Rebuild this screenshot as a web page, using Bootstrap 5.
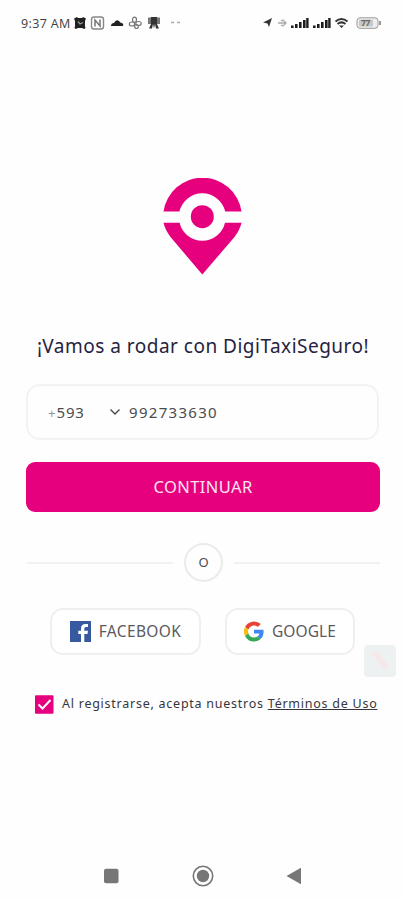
<!DOCTYPE html>
<html lang="es">
<head>
<meta charset="utf-8">
<meta name="viewport" content="width=device-width, initial-scale=1">
<title>DigiTaxiSeguro</title>
<link href="https://cdn.jsdelivr.net/npm/bootstrap@5.3.0/dist/css/bootstrap.min.css" rel="stylesheet">
<style>
:root{--pink:#e6007e}
body{font-family:"Noto Sans",sans-serif;color:#4c4c50;background:#fefefe}
.screen{width:404px;height:900px}
svg{display:block;flex:none}
.status{height:46px;padding:0 21px 0 21px;font:12.5px "Open Sans",sans-serif;color:#3d3d3d;letter-spacing:.35px}
.time{width:51px}
.pin{margin:132px 0 0 163px}
.headline{margin:56px 0 0 2px;height:30px;line-height:30px;font-size:19px;color:#25223f;letter-spacing:.49px}
.phone{margin:23px 25px 0 26px;height:56px;border:2px solid #f3f3f4;border-radius:14px;font-size:15px;letter-spacing:.9px;padding-left:20px}
.prefix{width:61px}
.plus{opacity:.6}
.number{letter-spacing:1.3px}
.go{margin:22px 24px 0 26px;height:50px;background:var(--pink);border-radius:9px;font-size:16.5px;color:#fde3f1;border:0;letter-spacing:.4px}
.go:hover{background:var(--pink);color:#fff}
.or{margin:31px 24px 0 27px;height:39px}
.line{height:2px;background:#f1f1f1}
.ring{width:39px;height:39px;border:2px solid #ebebeb;font-size:13px;margin:0 11px;line-height:1}
.social{margin:26px 49px 0 50px;height:47px}
.soc{border:2px solid #efefef;border-radius:13px;background:#fff;font-size:15.5px;color:#5a5a5e;padding:0}
.fb{width:151px;letter-spacing:.35px}.gg{width:130px;letter-spacing:.1px}
.terms{margin:39px 0 0 35px;height:20px;font-size:12.5px;color:#37373b;letter-spacing:.75px}
.bubble{position:absolute;left:363px;top:644px}
.sysnav{height:48px;padding:0 102px 0 103px}
</style>
</head>
<body>
<main class="screen position-relative d-flex flex-column overflow-hidden">
  <header class="status d-flex align-items-center justify-content-between">
    <div class="d-flex align-items-center">
      <span class="text-nowrap time">9:37 AM</span>
      <svg width="112" height="16" viewBox="0 0 112 16">
        <path d="M2 3.500l3-1.500 1 1h4l1-1 3 1.500-1 2.500v5l.5 2-1.500 1-2-1H6l-2 1-1.500-1 .5-2V6z" fill="#222"/><path d="M6 6.500l2 2.500 3-1.500" fill="none" stroke="#999" stroke-width="1.300"/>
        <rect x="19.500" y="2" width="12" height="12" rx="2.500" fill="none" stroke="#888" stroke-width="1.400"/>
        <path d="M23 11.500V5l5 6V4.500" fill="none" stroke="#777" stroke-width="1.500"/>
        <path d="M39 11q0-3 3-3 2-4 5-2 1 2 3 2 2 1 1 3z" fill="#222"/>
        <g fill="none" stroke="#777" stroke-width="1.200"><ellipse cx="62.500" cy="4.800" rx="2" ry="2.600"/><ellipse cx="66.500" cy="8.500" rx="2.700" ry="2"/><ellipse cx="60" cy="9" rx="2.700" ry="2"/><ellipse cx="64.500" cy="11.500" rx="1.800" ry="2"/></g>
        <path d="M76 2.500h3V9h-3zM85 2.500h3V9h-3z" fill="#777"/><path d="M79 2h6v7l2 4.500h-3l-1-4.500-1 4.500-1-4.500-1 4.500h-3L79 9z" fill="#333"/>
        <path d="M99 7.500h3M105 7.500h3" stroke="#aaa" stroke-width="1.500"/>
      </svg>
    </div>
    <svg width="121" height="16" viewBox="0 0 121 16">
      <path d="M1 7.500L10 3 7 12 5.500 8.500z" fill="#333"/>
      <path d="M16 8h8M19 6l2-1 3 3-3 3-2-1" fill="none" stroke="#aaa" stroke-width="1.300"/>
      <g fill="#1d1d1d"><path d="M29 10.500h2.600V13H29zM33 9h2.600v4H33zM37 7h2.600v6H37zM41 5h2.600v8H41zM44.200 3h2.400v10h-2.400z"/><path d="M51 10.500h2.600V13H51zM55 9h2.600v4H55zM59 7h2.600v6H59zM63 5h2.600v8H63zM66.200 3h2.400v10h-2.400z"/></g>
      <g fill="none" stroke="#333" stroke-width="2"><path d="M73.500 6.500q6-5 12 0M75.500 9q4-3.200 8 0"/></g><path d="M77 10.500h5L79.500 13z" fill="#333"/>
      <rect x="95" y="2.800" width="21" height="10.500" rx="3" fill="#eee" stroke="#999"/><rect x="97" y="4.500" width="14" height="7" rx="1" fill="#c8c8c8"/>
      <text x="99" y="11.300" font-size="8.500" font-weight="700" fill="#666" letter-spacing="-.3">77</text><path d="M118 6v4" stroke="#999" stroke-width="2"/>
    </svg>
  </header>

  <svg class="pin" width="79" height="97" viewBox="0 0 79 97" fill="#e6007e">
    <path d="M.5 33.500A39.400 39.400 0 0 1 78.500 33.500H62.200a23.500 23.500 0 0 0-45.800 0z"/>
    <path d="M.5 44.700H16.600a23.300 23.300 0 0 0 45.400 0H78.500Q77 51.500 71.500 59L39.300 96.500 7.500 59Q2 51.500 .5 44.700z"/>
    <circle cx="39.300" cy="38.700" r="11.500"/>
  </svg>

  <h1 class="headline text-center text-nowrap fw-normal">¡Vamos a rodar con DigiTaxiSeguro!</h1>

  <div class="phone d-flex align-items-center">
    <span class="prefix"><small class="plus">+</small>593</span>
    <svg width="12" height="8" viewBox="0 0 12 8"><path d="M1.500 1.500L6 6l4.500-4.500" fill="none" stroke="#444" stroke-width="1.300"/></svg>
    <span class="ms-2 number">992733630</span>
  </div>

  <button class="go btn d-flex align-items-center justify-content-center">CONTINUAR</button>

  <div class="or d-flex align-items-center">
    <div class="line flex-fill"></div>
    <div class="ring rounded-circle d-flex align-items-center justify-content-center">O</div>
    <div class="line flex-fill"></div>
  </div>

  <div class="social d-flex justify-content-between">
    <button class="soc fb btn d-flex align-items-center justify-content-center">
      <svg class="me-2" width="21" height="21" viewBox="0 0 21 21"><path d="M0 0h21v21H0z" fill="#3759a0"/><path d="M11 21v-8H8.300V9.700H11V7.500Q11 3 15.500 3H18v3h-2q-1.700 0-1.700 1.700v2H18l-.5 3.300h-3.200v8z" fill="#fff"/></svg>FACEBOOK</button>
    <button class="soc gg btn d-flex align-items-center justify-content-center">
      <svg class="me-2" width="20" height="21" viewBox="0 0 48 48"><path fill="#ea4335" d="M24 9.500c3.500 0 6.700 1.200 9.200 3.600l6.900-6.900A24 24 0 0 0 2.600 13.200l8 6.200C12.400 13.700 17.700 9.500 24 9.500z"/><path fill="#4285f4" d="M47 24.500c0-1.600-.2-3.100-.4-4.500H24v9h12.900c-.6 3-2.300 5.500-4.800 7.200l7.700 6C44.400 38 47 31.800 47 24.500z"/><path fill="#fbbc05" d="M10.500 28.600a14 14 0 0 1 0-9.200l-8-6.200a24 24 0 0 0 0 21.600z"/><path fill="#34a853" d="M24 48c6.500 0 11.900-2.100 15.900-5.800l-7.700-6c-2.200 1.500-4.900 2.300-8.200 2.300-6.300 0-11.600-4.200-13.500-9.900l-8 6.200A24 24 0 0 0 24 48z"/></svg>GOOGLE</button>
  </div>

  <div class="terms d-flex align-items-center text-nowrap">
    <svg class="me-2" width="19" height="19" viewBox="0 0 19 19"><rect width="18.500" height="18.500" y=".2" rx="1" fill="#e6007e"/><path d="M3.500 9.500l4 4 8-8.500" fill="none" stroke="#fff" stroke-width="2"/></svg>
    <span class="legal">Al registrarse, acepta nuestros <span class="text-decoration-underline">Términos de Uso</span></span>
  </div>

  <svg class="bubble" width="34" height="34" viewBox="0 0 34 34"><rect x="1" y="1" width="32" height="32" rx="4" fill="#edf1f2"/><path d="M8 8l6-1 12 15-4 5z" fill="#f6e8e8"/></svg>

  <nav class="sysnav d-flex align-items-center justify-content-between mt-auto">
    <svg width="16" height="16" viewBox="0 0 16 16"><rect x="1" y=".8" width="14.500" height="14.500" rx="2" fill="#777"/></svg>
    <svg width="22" height="22" viewBox="0 0 22 22"><circle cx="11" cy="11" r="9.700" fill="none" stroke="#777" stroke-width="1.600"/><circle cx="11" cy="11" r="6.200" fill="#777"/></svg>
    <svg width="16" height="18" viewBox="0 0 16 18"><path d="M.5 9L15 .8v16.400z" fill="#777"/></svg>
  </nav>
</main>
<script src="https://cdn.jsdelivr.net/npm/bootstrap@5.3.0/dist/js/bootstrap.bundle.min.js"></script>
</body>
</html>
